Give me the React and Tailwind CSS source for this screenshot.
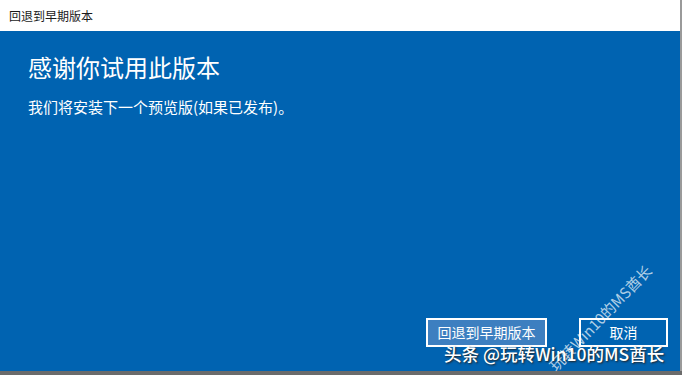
import React from 'react'

const cjk = { fontFamily: '"Microsoft YaHei", "Noto Sans CJK SC", sans-serif' }

export default function App() {
    return (
        <div className="relative w-[682px] h-[375px] overflow-hidden bg-[#6b6b6b]" style={cjk}>
            <div className="flex flex-col h-[371px] border-r-2 border-[#9a9a9a]">
                <div className="h-[31px] bg-white flex items-center pl-[9px] text-[12px] text-[#1a1a1a]">
                    回退到早期版本
                </div>
                <div className="flex-1 flex flex-col bg-[#0063b1] text-white pl-[28px]">
                    <h1 className="mt-[20px] text-[24px] leading-[32px]">感谢你试用此版本</h1>
                    <p className="mt-[14px] text-[15px] leading-[20px]">我们将安装下一个预览版(如果已发布)。</p>
                    <div className="mt-auto mb-[24px] flex justify-end gap-[32px] pr-[12px]">
                        <button className="w-[121px] h-[29px] border-2 border-white bg-[#3d7fc0] text-[14px] text-white">回退到早期版本</button>
                        <button className="w-[89px] h-[29px] border-2 border-white bg-[#0063b1] text-[14px] text-white">取消</button>
                    </div>
                </div>
            </div>
            <div className="absolute left-[444px] top-[341px] text-[17.5px] font-medium text-white [text-shadow:1px_1px_2px_#222]">
                头条 @玩转Win10的MS酋长
            </div>
            <div className="absolute left-[552px] top-[358px] leading-[20px] text-[15px] text-white/70 origin-left -rotate-[46deg] whitespace-nowrap">
                玩转Win10的MS酋长
            </div>
        </div>
    )
}
